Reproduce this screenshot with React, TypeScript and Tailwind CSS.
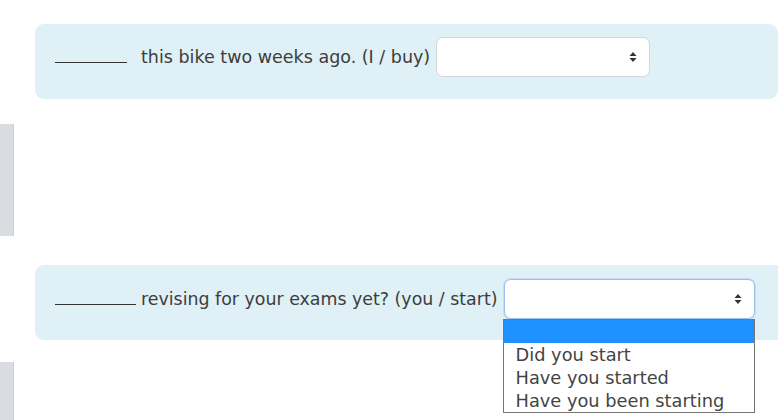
import React from 'react';

const Chevrons = () => (
  <svg width="8" height="12" viewBox="0 0 8 12" className="shrink-0">
    <path d="M4 1 L7.5 5 H0.5 Z" fill="#333" />
    <path d="M4 11 L7.5 7 H0.5 Z" fill="#333" />
  </svg>
);

const Select = ({ focused, width }: { focused?: boolean; width: string }) => (
  <div
    className={`${width} h-[40px] bg-white rounded-[7px] border flex items-center justify-end pr-[12px] ${
      focused ? 'border-[#9cc0ee] shadow-[0_0_0_1px_#c7dcf6]' : 'border-[#d2d6da]'
    }`}
  >
    <Chevrons />
  </div>
);

const options = ['', 'Did you start', 'Have you started', 'Have you been starting'];

export default function App() {
  return (
    <div
      className="w-[778px] h-[420px] overflow-hidden bg-white text-[#3d3d3d] flex"
      style={{ fontFamily: '"DejaVu Sans", "Open Sans", sans-serif' }}
    >
      {/* left edge tabs */}
      <div className="w-[35px] shrink-0 flex flex-col">
        <div className="mt-[124px] w-[14px] h-[115px] bg-[#d9dde1] border-r border-[#c9ced3]" />
        <div className="mt-[126px] w-[14px] h-[60px] bg-[#d9dde1] border-r border-[#c9ced3]" />
      </div>

      <div className="flex-1 flex flex-col">
        <div className="mt-[24px] h-[75px] bg-[#dff0f6] rounded-[9px] flex items-start pt-[13px] pl-[20px] text-[17.5px]">
          <div className="h-[40px] flex items-center">
            <span className="w-[72px] border-b border-[#333] h-[1px] mt-[10px]" />
            <span className="ml-[14px]">this bike two weeks ago. (I / buy)</span>
          </div>
          <div className="ml-[6px]">
            <Select width="w-[214px]" />
          </div>
        </div>

        <div className="mt-[166px] h-[75px] bg-[#dff0f6] rounded-l-[9px] flex items-start pt-[14px] pl-[20px] text-[17.4px] relative">
          <div className="h-[40px] flex items-center">
            <span className="w-[81px] border-b border-[#333] h-[1px] mt-[10px]" />
            <span className="ml-[5px]">revising for your exams yet? (you / start)</span>
          </div>
          <div className="ml-[6px] relative">
            <Select width="w-[251px]" focused />
            <ul className="absolute left-[-1px] top-[40px] w-[252px] bg-white border border-[#767676] text-[17.8px] leading-[23px] text-[#444] z-10">
              {options.map((o, i) => (
                <li
                  key={i}
                  className={`h-[23px] px-[12px] ${i === 0 ? 'bg-[#1e90ff]' : ''}`}
                >
                  {o}
                </li>
              ))}
            </ul>
          </div>
        </div>
      </div>
    </div>
  );
}
